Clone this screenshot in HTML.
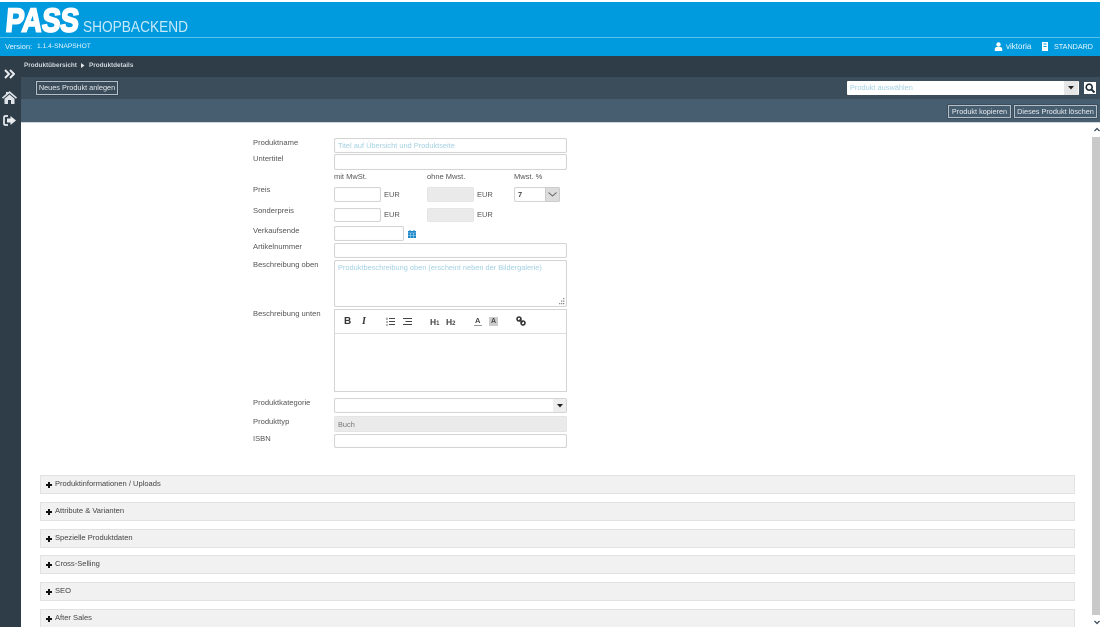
<!DOCTYPE html>
<html lang="de"><head><meta charset="utf-8"><title>PASS Shopbackend</title>
<style>
html,body{margin:0;padding:0;width:1100px;height:627px;overflow:hidden;background:#fff}
body{position:relative;font-family:"Liberation Sans","DejaVu Sans",sans-serif;font-size:7.6px;color:#555}
#w{position:absolute;left:0;top:0;width:1100px;height:627px;overflow:hidden;filter:blur(.35px)}
.a,.l,.i,.acc,.btn,.t{position:absolute;box-sizing:border-box;white-space:nowrap}
.l{left:253px;color:#555;line-height:10px;font-size:7.6px;margin-top:1px}
.t{line-height:10px;font-size:7.5px}
.i{border:1px solid #d4d4d4;border-radius:2px;background:#fff;box-shadow:inset 0 0 1px #eee;padding-left:3px;color:#a3d0e2;font-size:7.4px}
.dis{background:#eaeaea;border-color:#e4e4e4}
.acc{left:40px;width:1035px;height:19px;background:#f1f1f1;border:1px solid #e2e2e2;color:#444;line-height:16px;padding-left:14px;font-size:7.55px}
.acc svg{position:absolute;left:5px;top:6px}
.btn{border:1px solid #b4bec6;color:#e6eaed;text-align:center;font-size:7.3px;box-shadow:0 0 0 .5px #2f3d49}
svg{display:block}
</style></head><body><div id="w">
<div class="a" style="left:0;top:0;width:1100px;height:2px;background:#fff"></div>
<div class="a" style="left:0;top:2px;width:1100px;height:54px;background:#009bdf"></div>
<div class="a" style="left:0;top:37px;width:1100px;height:1px;background:#5cc0ec"></div>
<svg class="a" style="left:0;top:0" width="90" height="36"><text transform="translate(5 31.5) skewX(-5)" font-family="Liberation Sans" font-weight="700" font-size="33" textLength="73" lengthAdjust="spacingAndGlyphs" fill="#fff" stroke="#fff" stroke-width="2">PASS</text></svg>
<svg class="a" style="left:83px;top:15px" width="110" height="20"><text x="0" y="17" font-family="Liberation Sans" font-size="16" textLength="105" lengthAdjust="spacingAndGlyphs" fill="#c8e9f8">SHOPBACKEND</text></svg>
<div class="t" style="left:5px;top:42px;color:#e6f5fc">Version:</div>
<div class="t" style="left:37px;top:42px;color:#e6f5fc;font-size:6.7px">1.1.4-SNAPSHOT</div>
<svg class="a" style="left:994px;top:42px" width="9" height="9" viewBox="0 0 9 9"><circle cx="4.5" cy="2.5" r="2.2" fill="#fff"/><path d="M.8 9V7Q1 5 3 5H6Q8 5 8.2 7V9Z" fill="#fff"/></svg>
<div class="t" style="left:1006px;top:42px;color:#eaf7fd;font-size:8px">viktoria</div>
<svg class="a" style="left:1041px;top:42px" width="8" height="9" viewBox="0 0 8 9"><path d="M1 0H7V9H1Z" fill="#fff"/><path d="M2.5 2H5.5M2.5 4.5H5.5" stroke="#009bdf"/></svg>
<div class="t" style="left:1054px;top:42px;color:#eaf7fd;font-size:7.2px">STANDARD</div>

<div class="a" style="left:0;top:56px;width:1100px;height:21px;background:#2f3d49"></div>
<div class="a" style="left:0;top:56px;width:21px;height:571px;background:#2f3d49"></div>
<div class="a" style="left:21px;top:77px;width:1079px;height:22px;background:#3b4c5a"></div>
<div class="a" style="left:21px;top:99px;width:1079px;height:23px;background:#475d70"></div>
<div class="t" style="left:24px;top:61px;color:#d2d8dc;font-size:6.4px;font-weight:700">Produktübersicht</div>
<svg class="a" style="left:81px;top:63px" width="4" height="5"><path d="M0 0L3.5 2.5L0 5Z" fill="#e5e5e5"/></svg>
<div class="t" style="left:89px;top:61px;color:#d2d8dc;font-size:6.4px;font-weight:700">Produktdetails</div>

<svg class="a" style="left:4px;top:69px" width="11" height="10" viewBox="0 0 11 10" fill="none" stroke="#e8ecef" stroke-width="2"><path d="M1 1L5 5L1 9M6 1L10 5L6 9"/></svg>
<svg class="a" style="left:2px;top:91px" width="15" height="13" viewBox="0 0 15 13" fill="#dfe4e8"><path d="M7.5 0L15 6.5L14 7.8L7.5 2.2L1 7.8L0 6.5L4 3V1H6V1.5Z"/><path d="M2.5 7.7L7.5 3.5L12.5 7.7V13H9V9H6V13H2.5Z"/></svg>
<svg class="a" style="left:3px;top:115px" width="13" height="11" viewBox="0 0 13 11"><path d="M5 1H2.5Q1 1 1 2.5V8.5Q1 10 2.5 10H5" fill="none" stroke="#e8ecef" stroke-width="1.7"/><path d="M7.5 1L13 5.5L7.5 10V7.5H4V3.5H7.5Z" fill="#e8ecef"/></svg>

<div class="btn" style="left:36px;top:81px;width:82px;height:14px;line-height:12px">Neues Produkt anlegen</div>
<div class="a" style="left:847px;top:81px;width:232px;height:14px;background:#fff;border-radius:1px;padding-left:3px;line-height:14px;color:#a3d0e2;font-size:7.4px">Produkt auswählen</div>
<div class="a" style="left:1064px;top:81px;width:14px;height:14px;background:#e6e6e6"></div>
<svg class="a" style="left:1068px;top:86px" width="6" height="4"><path d="M0 0H6L3 3.5Z" fill="#222"/></svg>
<div class="a" style="left:1084px;top:82px;width:12px;height:12px;background:#fff"></div>
<svg class="a" style="left:1085px;top:83px" width="10" height="10" viewBox="0 0 10 10" fill="none" stroke="#1d2a33" stroke-width="1.6"><circle cx="4.2" cy="4.2" r="3"/><path d="M6.5 6.5L9.5 9.5" stroke-width="2"/></svg>
<div class="btn" style="left:948px;top:105px;width:63px;height:13px;line-height:11px">Produkt kopieren</div>
<div class="btn" style="left:1014px;top:105px;width:83px;height:13px;line-height:11px">Dieses Produkt löschen</div>

<div class="a" style="left:21px;top:122px;width:1079px;height:1px;background:#cfd5d9"></div>
<div class="a" style="left:1092px;top:123px;width:8px;height:504px;background:#fff"></div>
<div class="a" style="left:1092px;top:137px;width:8px;height:478px;background:#c9c9c9"></div>
<svg class="a" style="left:1094px;top:127px" width="6" height="5"><path d="M.5 4L3 1.5L5.5 4" fill="none" stroke="#3b4c5a" stroke-width="1.3"/></svg>
<svg class="a" style="left:1094px;top:620px" width="6" height="5"><path d="M.5 1L3 3.5L5.5 1" fill="none" stroke="#3b4c5a" stroke-width="1.3"/></svg>

<div class="l" style="top:137px">Produktname</div>
<div class="i" style="left:334px;top:138px;width:233px;height:15px;line-height:13px">Titel auf Übersicht und Produktseite</div>
<div class="l" style="top:153px">Untertitel</div>
<div class="i" style="left:334px;top:154px;width:233px;height:16px"></div>
<div class="t" style="left:334px;top:172px">mit MwSt.</div>
<div class="t" style="left:427px;top:172px">ohne Mwst.</div>
<div class="t" style="left:514px;top:172px">Mwst. %</div>
<div class="l" style="top:184px">Preis</div>
<div class="i" style="left:334px;top:187px;width:47px;height:15px"></div>
<div class="t" style="left:384px;top:190px">EUR</div>
<div class="i dis" style="left:427px;top:187px;width:47px;height:15px"></div>
<div class="t" style="left:477px;top:190px">EUR</div>
<div class="i" style="left:514px;top:187px;width:46px;height:15px;color:#444;line-height:13px;font-weight:700">7</div>
<div class="a" style="left:545px;top:187px;width:15px;height:15px;background:#dcdcdc;border:1px solid #ccc;border-radius:0 2px 2px 0"></div>
<svg class="a" style="left:548px;top:192px" width="9" height="5"><path d="M.5 .5L4.5 4L8.5 .5" fill="none" stroke="#666"/></svg>
<div class="l" style="top:205px">Sonderpreis</div>
<div class="i" style="left:334px;top:208px;width:47px;height:14px"></div>
<div class="t" style="left:384px;top:210px">EUR</div>
<div class="i dis" style="left:427px;top:208px;width:47px;height:14px"></div>
<div class="t" style="left:477px;top:210px">EUR</div>
<div class="l" style="top:225px">Verkaufsende</div>
<div class="i" style="left:334px;top:226px;width:70px;height:15px"></div>
<svg class="a" style="left:408px;top:230px" width="8" height="8" viewBox="0 0 8 8"><path d="M0 1H8V8H0Z" fill="#1a86c8"/><path d="M0 3H8M2.7 3V8M5.3 3V8M0 5.5H8" stroke="#bfe0f2" stroke-width=".5"/><path d="M2 0V2M6 0V2" stroke="#1a86c8"/></svg>
<div class="l" style="top:241px">Artikelnummer</div>
<div class="i" style="left:334px;top:243px;width:233px;height:15px"></div>
<div class="l" style="top:259px">Beschreibung oben</div>
<div class="i" style="left:334px;top:260px;width:233px;height:47px;line-height:13px">Produktbeschreibung oben (erscheint neben der Bildergalerie)</div>
<svg class="a" style="left:556px;top:298px" width="9" height="8" fill="#888"><path d="M7 0h1.3v1.3H7zM5 2.5h1.3v1.3H5zM7 2.5h1.3v1.3H7zM3 5h1.3v1.3H3zM5 5h1.3v1.3H5zM7 5h1.3v1.3H7z"/></svg>
<div class="l" style="top:308px">Beschreibung unten</div>
<div class="a" style="left:334px;top:309px;width:233px;height:83px;border:1px solid #d4d4d4;background:#fff"></div>
<div class="a" style="left:335px;top:333px;width:231px;height:1px;background:#ddd"></div>
<div class="a" style="left:344px;top:316px;font:700 10px/11px 'Liberation Sans',sans-serif;color:#333">B</div>
<div class="a" style="left:362px;top:316px;font:italic 700 10px/11px 'Liberation Serif',serif;color:#333">I</div>
<svg class="a" style="left:386px;top:317px" width="9" height="9" fill="none" stroke="#444"><path d="M3 1.5H9M3 4.5H9M3 7.5H9"/><path d="M1 .5V3M1 4V6M1 7V9" stroke-width=".8"/></svg>
<svg class="a" style="left:403px;top:317px" width="9" height="9" fill="none" stroke="#444"><path d="M0 1.5H9M2.5 4.5H9M0 7.5H9"/></svg>
<div class="a" style="left:430px;top:317px;font:700 8.5px/10px 'Liberation Sans',sans-serif;color:#444;white-space:nowrap">H<span style="font-size:6px">1</span></div>
<div class="a" style="left:446px;top:317px;font:700 8.5px/10px 'Liberation Sans',sans-serif;color:#444;white-space:nowrap">H<span style="font-size:6px">2</span></div>
<div class="a" style="left:475px;top:316px;font:700 7.5px/9px 'Liberation Sans',sans-serif;color:#444">A</div>
<div class="a" style="left:474px;top:325px;width:8px;height:1px;background:#999"></div>
<div class="a" style="left:489px;top:317px;width:9px;height:9px;background:#ccc;font:700 7px/9px 'Liberation Sans',sans-serif;color:#444;text-align:center">A</div>
<svg class="a" style="left:516px;top:316px" width="10" height="10" viewBox="0 0 10 10" fill="none" stroke="#333" stroke-width="1.6"><circle cx="3" cy="3" r="2"/><circle cx="7" cy="7" r="2"/><path d="M3.5 3.5L6.5 6.5"/></svg>
<div class="l" style="top:397px">Produktkategorie</div>
<div class="i" style="left:334px;top:398px;width:233px;height:15px"></div>
<div class="a" style="left:553px;top:399px;width:13px;height:13px;background:#eee"></div>
<svg class="a" style="left:557px;top:404px" width="6" height="4"><path d="M0 0H6L3 3.5Z" fill="#222"/></svg>
<div class="l" style="top:416px">Produkttyp</div>
<div class="i dis" style="left:334px;top:416px;width:233px;height:16px;color:#777;line-height:15px">Buch</div>
<div class="l" style="top:433px">ISBN</div>
<div class="i" style="left:334px;top:434px;width:233px;height:14px"></div>

<div class="acc" style="top:475px">Produktinformationen / Uploads<svg width="6" height="6"><path d="M2 0H4V2H6V4H4V6H2V4H0V2H2Z" fill="#111"/></svg></div>
<div class="acc" style="top:502px">Attribute &amp; Varianten<svg width="6" height="6"><path d="M2 0H4V2H6V4H4V6H2V4H0V2H2Z" fill="#111"/></svg></div>
<div class="acc" style="top:529px">Spezielle Produktdaten<svg width="6" height="6"><path d="M2 0H4V2H6V4H4V6H2V4H0V2H2Z" fill="#111"/></svg></div>
<div class="acc" style="top:555px">Cross-Selling<svg width="6" height="6"><path d="M2 0H4V2H6V4H4V6H2V4H0V2H2Z" fill="#111"/></svg></div>
<div class="acc" style="top:582px">SEO<svg width="6" height="6"><path d="M2 0H4V2H6V4H4V6H2V4H0V2H2Z" fill="#111"/></svg></div>
<div class="acc" style="top:609px">After Sales<svg width="6" height="6"><path d="M2 0H4V2H6V4H4V6H2V4H0V2H2Z" fill="#111"/></svg></div>
</div></body></html>
